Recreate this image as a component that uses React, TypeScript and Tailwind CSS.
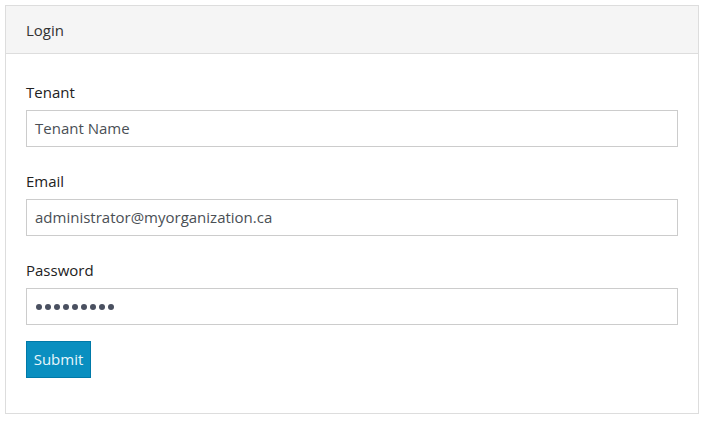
export default function App() {
  const font = { fontFamily: '"Open Sans", "Noto Sans", sans-serif' };
  return (
    <div className="min-h-screen bg-white p-[5px]" style={font}>
      <div className="w-[694px] border border-[#dddddd] bg-white">
        <div className="flex h-[48px] items-center border-b border-[#dddddd] bg-[#f5f5f5] px-[20px] pt-[2px] text-[15px] text-[#333333]">
          Login
        </div>
        <form className="flex flex-col px-[20px] pt-[30px] pb-[35px]" onSubmit={(e) => e.preventDefault()}>
          <Field label="Tenant" value="Tenant Name" />
          <Field label="Email" value="administrator@myorganization.ca" />
          <Field label="Password" value="" password last />
          <div className="mt-[16px]">
            <button
              type="submit"
              className="h-[37px] w-[65px] border border-[#0079a8] bg-[#0a8fc0] text-[15px] text-[#e8f6fb]"
            >
              Submit
            </button>
          </div>
        </form>
      </div>
    </div>
  );
}

function Field({ label, value, password, last }: { label: string; value: string; password?: boolean; last?: boolean }) {
  return (
    <div className={last ? "" : "mb-[26px]"}>
      <div className="mb-[7px] h-[19px] text-[15px] leading-[17px] text-[#222222]">{label}</div>
      <div className="flex h-[37px] w-[652px] items-center border border-[#cccccc] bg-white px-[8px] text-[15px] text-[#4a4f55]">
        {password ? (
          <span className="flex gap-[3px] pl-[1px]" aria-label="password">
            {Array.from({ length: 9 }).map((_, i) => (
              <span key={i} className="h-[6px] w-[6px] rounded-full bg-[#4a5060]" />
            ))}
          </span>
        ) : (
          value
        )}
      </div>
    </div>
  );
}
